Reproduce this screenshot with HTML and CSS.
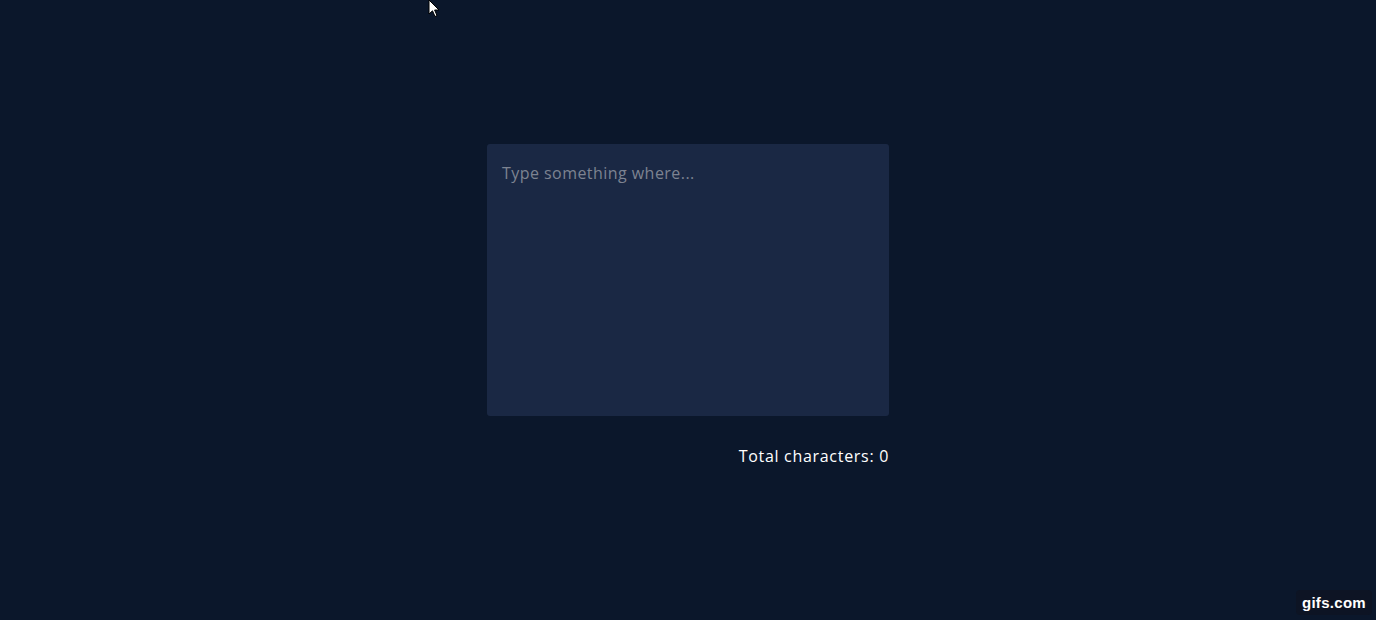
FILE: index.html
```html
<!DOCTYPE html>
<html>
<head>
<meta charset="utf-8">
<link rel="stylesheet" href="styles.css">
</head>
<body>
<main class="wrap">
  <textarea class="box" placeholder="Type something where..."></textarea>
  <p class="count">Total characters: <span>0</span></p>
</main>
<svg class="cursor" width="14" height="20" viewBox="0 0 14 20"><path d="M1 1 L1 15 L4.5 11.8 L7 17.5 L9 16.6 L6.6 11 L11 11 Z" fill="#fff" stroke="#000" stroke-width="1"/></svg>
<div class="badge">gifs.com</div>
</body>
</html>
```
FILE: styles.css
```css
html, body { margin: 0; height: 100%; }
body {
  background: #0b172b;
  font-family: "Open Sans", "Liberation Sans", sans-serif;
  overflow: hidden;
}
.wrap {
  display: flex;
  flex-direction: column;
  align-items: flex-end;
  width: 402px;
  margin: 0 auto;
  padding-top: 144px;
}
.box {
  box-sizing: border-box;
  width: 402px;
  height: 272px;
  background: #1a2844;
  border: none;
  border-radius: 3px;
  padding: 18px 15px;
  color: #d8dbe2;
  font-family: inherit;
  font-size: 16px;
  letter-spacing: 0.45px;
  resize: none;
  outline: none;
}
.box::placeholder { color: #7d8391; }
.count {
  margin: 28px 0 0;
  color: #ffffff;
  font-size: 16px;
  letter-spacing: 0.7px;
  line-height: 24px;
}
.cursor {
  position: absolute;
  left: 428px;
  top: -1px;
}
.badge {
  position: absolute;
  right: 4px;
  bottom: 5px;
  background: #0d1424;
  color: #fff;
  font-family: "Liberation Sans", sans-serif;
  font-weight: 700;
  font-size: 15px;
  letter-spacing: 0.3px;
  padding: 4px 6px;
  border-radius: 4px;
}
```
